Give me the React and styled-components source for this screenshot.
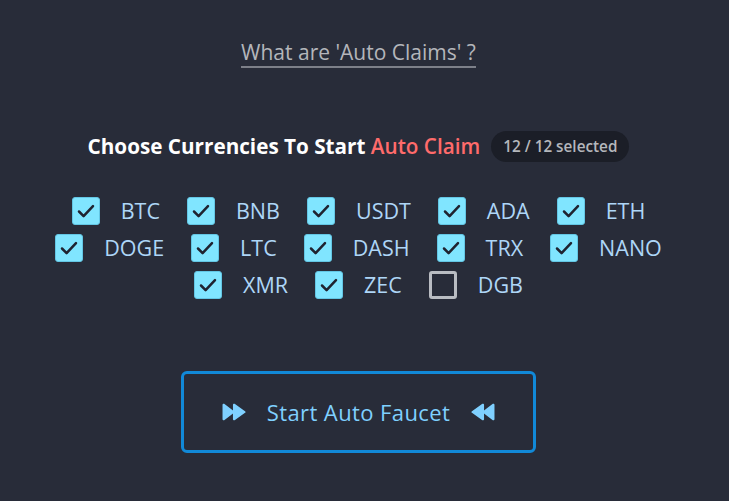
import React, { useState } from 'react'
import styled, { createGlobalStyle } from 'styled-components'

const GlobalStyle = createGlobalStyle`
  html, body {
    margin: 0;
    padding: 0;
    background: #282c39;
    font-family: "Open Sans", "Noto Sans", sans-serif;
  }
`

const COINS = ['BTC', 'BNB', 'USDT', 'ADA', 'ETH', 'DOGE', 'LTC', 'DASH', 'TRX', 'NANO', 'XMR', 'ZEC', 'DGB']

const Check = () => (
  <svg width="22" height="22" viewBox="0 0 22 22">
    <path d="M4 11.5l4.6 4.6 9.4-10" fill="none" stroke="#1f2330" strokeWidth="2.5" strokeLinecap="round" strokeLinejoin="round" />
  </svg>
)

// double triangle, flip for the backward one
const Arrows = ({ flip }) => (
  <svg width="24" height="18" viewBox="0 0 23 17" style={flip ? { transform: 'scaleX(-1)' } : undefined}>
    <path d="M0.5 1.5v14a1 1 0 0 0 1.6.8L11.5 9.3a1 1 0 0 0 0-1.6L2.1.7A1 1 0 0 0 0.5 1.5z" fill="currentColor" />
    <path d="M10.5 1.5v14a1 1 0 0 0 1.6.8l10-7a1 1 0 0 0 0-1.6l-10-7A1 1 0 0 0 10.5 1.5z" fill="currentColor" />
  </svg>
)

export default function App() {
  const [selected, setSelected] = useState(COINS.filter(c => c !== 'DGB'))

  const toggle = (coin) => {
    setSelected(prev => prev.includes(coin) ? prev.filter(c => c !== coin) : [...prev, coin])
  }

  return (
    <>
      <GlobalStyle />
      <Page>
        <HelpLink href="#">What are 'Auto Claims' ?</HelpLink>

        <Heading>
          <Title>Choose Currencies To Start <Accent>Auto Claim</Accent></Title>
          <Badge>12 / 12 selected</Badge>
        </Heading>

        <CoinList>
          {COINS.map(coin => {
            const on = selected.includes(coin)
            return (
              <Coin key={coin} onClick={() => toggle(coin)}>
                <Box $checked={on}>{on && <Check />}</Box>
                <CoinName>{coin}</CoinName>
              </Coin>
            )
          })}
        </CoinList>

        <StartButton>
          <Arrows />
          <span>Start Auto Faucet</span>
          <Arrows flip />
        </StartButton>
      </Page>
    </>
  )
}

const Page = styled.div`
  width: 717px;
  height: 501px;
  display: flex;
  flex-direction: column;
  align-items: center;
  padding-top: 38px;
  box-sizing: border-box;
`

const HelpLink = styled.a`
  font-size: 21px;
  line-height: 28px;
  color: #b4b6bb;
  text-decoration: none;
  border-bottom: 2px solid #7d8089;
`

const Heading = styled.div`
  display: flex;
  align-items: center;
  gap: 11px;
  margin-top: 63px;
`

const Title = styled.h2`
  margin: 0;
  font-size: 20.7px;
  font-weight: 700;
  color: #ffffff;
  line-height: 31px;
`

const Accent = styled.span`
  color: #ff6b6b;
  font-weight: 600;
`

const Badge = styled.span`
  background: #1b1e27;
  color: #b5b7bc;
  font-size: 15.3px;
  font-weight: 600;
  height: 31px;
  line-height: 31px;
  padding: 0 12px;
  border-radius: 16px;
`

const CoinList = styled.div`
  width: 680px;
  display: flex;
  flex-wrap: wrap;
  justify-content: center;
  row-gap: 9px;
  margin-top: 35px;
`

const Coin = styled.label`
  display: flex;
  align-items: center;
  gap: 21px;
  margin: 0 13.5px;
  cursor: pointer;
  height: 28px;
`

const Box = styled.span`
  width: 28px;
  height: 28px;
  box-sizing: border-box;
  border-radius: 3px;
  display: flex;
  align-items: center;
  justify-content: center;
  background: ${p => p.$checked ? '#80e5ff' : 'transparent'};
  border: ${p => p.$checked ? '1px solid #63c6e4' : '3px solid #b9bcc2'};
`

const CoinName = styled.span`
  font-size: 21.5px;
  color: #aed6f7;
  line-height: 28px;
`

const StartButton = styled.button`
  margin-top: 72px;
  width: 355px;
  height: 82px;
  box-sizing: border-box;
  background: transparent;
  border: 3px solid #1189d8;
  border-radius: 6px;
  display: flex;
  align-items: center;
  justify-content: center;
  gap: 21px;
  color: #7fd0ff;
  font-family: "Open Sans", "Noto Sans", sans-serif;
  font-size: 22px;
  letter-spacing: 0.4px;
  cursor: pointer;
`
